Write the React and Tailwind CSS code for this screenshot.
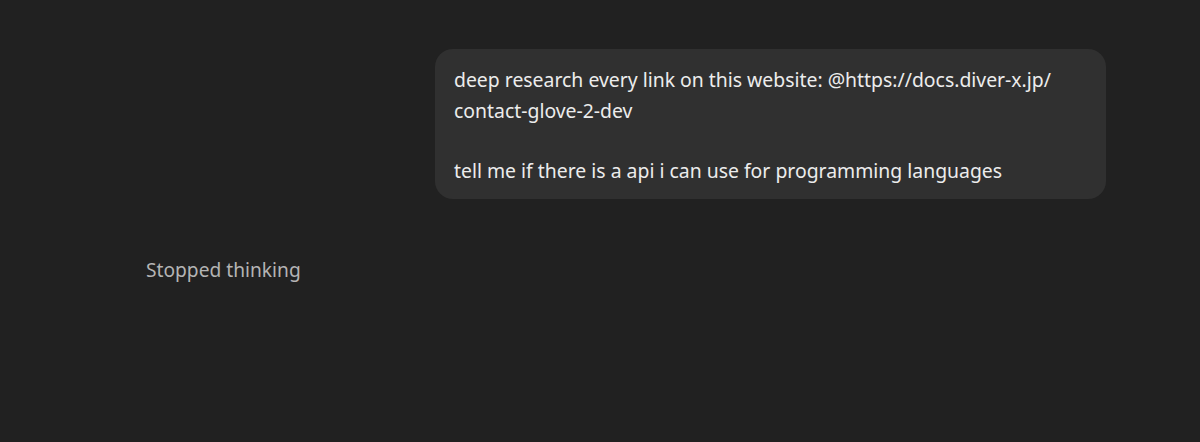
export default function App() {
  return (
    <div className="min-h-[442px] w-full bg-[#212121] font-['Noto_Sans',sans-serif] text-[#ececec]">
      <div className="flex flex-col pl-[146px] pr-[94px] pt-[49px]">
        <div className="flex justify-end">
          <div className="w-[671px] rounded-[18px] bg-[#303030] px-[19px] pt-[16px] pb-[12px] text-[19.4px] leading-[30.5px]">
            <p>deep research every link on this website: @https://docs.diver-x.jp/</p>
            <p>contact-glove-2-dev</p>
            <p className="h-[30px]"></p>
            <p>tell me if there is a api i can use for programming languages</p>
          </div>
        </div>
        <div className="mt-[59px] text-[19.2px] leading-[24px] text-[#b4b4b4]">Stopped thinking</div>
      </div>
    </div>
  );
}
